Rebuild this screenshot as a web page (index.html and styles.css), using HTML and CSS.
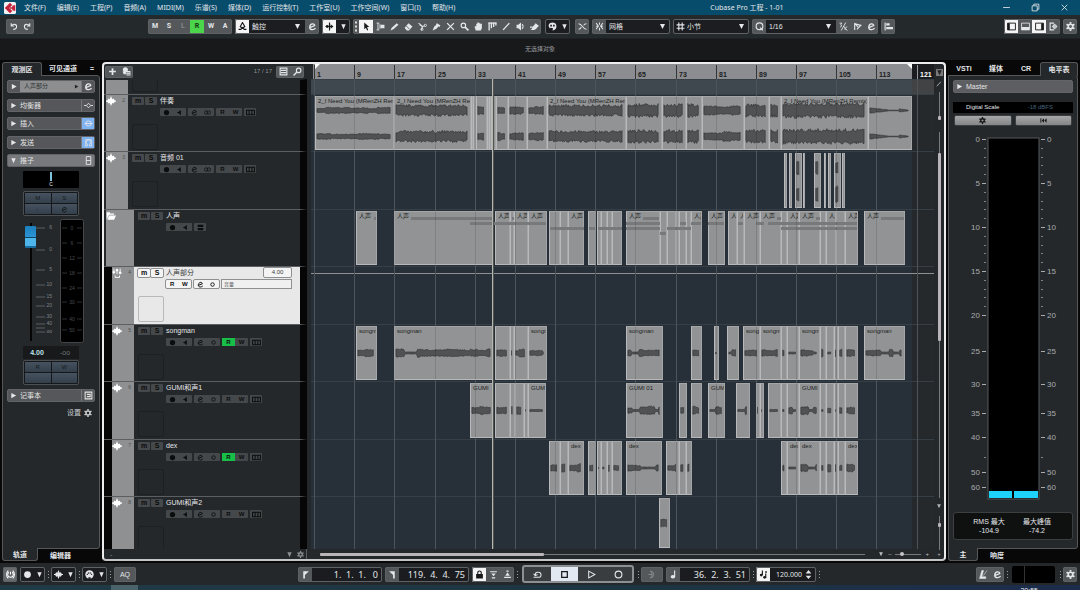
FILE: index.html
```html
<!DOCTYPE html>
<html lang="zh-CN">
<head>
<meta charset="utf-8">
<title>Cubase Pro 工程 - 1-01</title>
<link rel="stylesheet" href="styles.css">
</head>
<body>
<svg class="sprite" aria-hidden="true">
  <symbol id="i-undo" viewBox="0 0 16 16"><path d="M4 2v5h5M4.500 7c2-4 9-4 9 1 0 4-4 5-6 5" fill="none" stroke="currentColor" stroke-width="2"/></symbol>
  <symbol id="i-redo" viewBox="0 0 16 16"><path d="M12 2v5H7M11.500 7c-2-4-9-4-9 1 0 4 4 5 6 5" fill="none" stroke="currentColor" stroke-width="2"/></symbol>
  <symbol id="i-edit" viewBox="0 0 16 16"><path d="M3 10 12 6.500C12 1.500 4 2 3 8.500 2.500 15 10 15 13.500 11" fill="none" stroke="currentColor" stroke-width="2.200"/></symbol>
  <symbol id="i-touch" viewBox="0 0 16 16"><path d="M8 1 4 8l4 3 4-3zM1 13h4l3-3 3 3h4" fill="none" stroke="currentColor" stroke-width="2"/></symbol>
  <symbol id="i-scroll" viewBox="0 0 16 16"><path d="M7 1h2v14H7zM1 7h9V4l5 4-5 4V9H1z"/><circle cx="4" cy="8" r="2.500"/></symbol>
  <symbol id="i-arrow" viewBox="0 0 16 16"><path d="M4 1v12l3-3 2 5 2-1-2-5h4z"/></symbol>
  <symbol id="i-range" viewBox="0 0 16 16"><path d="M1 2h5M1 14h5M3.500 2v12M7 4v8" fill="none" stroke="currentColor" stroke-width="1.600"/><path d="M8 5h7v6H8z"/></symbol>
  <symbol id="i-pencil" viewBox="0 0 16 16"><path d="m1 15 2-5 9-8 3 3-9 8z"/></symbol>
  <symbol id="i-eraser" viewBox="0 0 16 16"><path d="m1 10 7-8 7 6-6 7H5z"/><path d="m4 7 6 6" stroke="#55585b" stroke-width="1.500"/></symbol>
  <symbol id="i-scissors" viewBox="0 0 16 16"><path d="m1 2 7 6 4-1M6 14l2-6M8 8 3 5" fill="none" stroke="currentColor" stroke-width="2"/><circle cx="13" cy="6" r="2" fill="none" stroke="currentColor" stroke-width="1.500"/><circle cx="7" cy="13" r="2" fill="none" stroke="currentColor" stroke-width="1.500"/></symbol>
  <symbol id="i-glue" viewBox="0 0 16 16"><path d="m1 15 3-7 5-4 3 3-4 5zM9 2l6 4-2 3-6-5z"/></symbol>
  <symbol id="i-cross" viewBox="0 0 16 16"><path d="m2 2 12 12M14 2 2 14" stroke="currentColor" stroke-width="2.200"/></symbol>
  <symbol id="i-search" viewBox="0 0 16 16"><circle cx="6" cy="6" r="4" fill="none" stroke="currentColor" stroke-width="2"/><path d="m9 9 6 6" stroke="currentColor" stroke-width="3"/></symbol>
  <symbol id="i-find" viewBox="0 0 16 16"><circle cx="10" cy="6" r="4" fill="none" stroke="currentColor" stroke-width="2"/><path d="m7 9-6 6" stroke="currentColor" stroke-width="2.500"/></symbol>
  <symbol id="i-hand" viewBox="0 0 16 16"><path d="M3 15 1 8l2-1 1 2V3h2V1h3v1h2v1h3v8l-2 4z"/></symbol>
  <symbol id="i-comp" viewBox="0 0 16 16"><path d="M2 1v14M6 1v10M10 1v8M14 1v5" stroke="currentColor" stroke-width="2.400"/><path d="M1 2h14" stroke="currentColor" stroke-width="2"/></symbol>
  <symbol id="i-line" viewBox="0 0 16 16"><path d="M2 14 13 2" stroke="currentColor" stroke-width="2.400"/></symbol>
  <symbol id="i-speaker" viewBox="0 0 16 16"><path d="M1 5h3l5-4v14l-5-4H1z"/><path d="M11 4c2 2 2 6 0 8" fill="none" stroke="currentColor" stroke-width="2"/></symbol>
  <symbol id="i-brush" viewBox="0 0 16 16"><path d="M0 14c5-1 3-6 7-8l3-4 6 5c-3 1-4 6-9 7zM0 8h4v2H0z"/></symbol>
  <symbol id="i-palette" viewBox="0 0 16 16"><path d="M1 7c0-8 14-8 14 0 0 5-2 6-4 7l-3 1 1-4-4-1-2 1z"/><path d="M4 5h3v3H4zM9 5h3v3H9z" fill="#222"/></symbol>
  <symbol id="i-xfade" viewBox="0 0 16 16"><path d="M1 3c7 0 7 10 14 10M1 13c3 0 4-2 5-4M10 6c1-2 3-3 5-3" fill="none" stroke="currentColor" stroke-width="1.800"/></symbol>
  <symbol id="i-snap" viewBox="0 0 16 16"><path d="m2 2 4 5-4 6M14 2l-4 5 4 6M8 1v4M8 10v5M2 7.500h4M10 7.500h4" fill="none" stroke="currentColor" stroke-width="1.800"/></symbol>
  <symbol id="i-hash" viewBox="0 0 16 16"><path d="M5 1v14M11 1v14M1 5h14M1 11h14" stroke="currentColor" stroke-width="2"/></symbol>
  <symbol id="i-quant" viewBox="0 0 16 16"><circle cx="8" cy="7.500" r="6" fill="none" stroke="currentColor" stroke-width="2"/><path d="m9 10 5 5" stroke="currentColor" stroke-width="2"/></symbol>
  <symbol id="i-ratio" viewBox="0 0 16 16"><path d="M4 15 12 1M1 2h4L3 5l2 2-3 2M10 8l1 6M14 8l-3 4 4 3" fill="none" stroke="currentColor" stroke-width="1.600"/></symbol>
  <symbol id="i-flag" viewBox="0 0 16 16"><path d="M3 14V3l11 3-7 7M3 2l6 7" fill="none" stroke="currentColor" stroke-width="2"/></symbol>
  <symbol id="i-align" viewBox="0 0 16 16"><path d="M2 1v14" stroke="currentColor" stroke-width="2"/><path d="M4 2h6v4H4zM4 9h12v4H4z"/></symbol>
  <symbol id="i-zoneL" viewBox="0 0 16 16"><path d="M1 2h14v12H1z" fill="none" stroke="currentColor" stroke-width="1.600"/><path d="M1 2h4v12H1z"/></symbol>
  <symbol id="i-zoneB" viewBox="0 0 16 16"><path d="M1 2h14v12H1z" fill="none" stroke="currentColor" stroke-width="1.500"/><path d="M1 9h14v5H1z"/></symbol>
  <symbol id="i-zoneR" viewBox="0 0 16 16"><path d="M1 2h14v12H1z" fill="none" stroke="currentColor" stroke-width="1.600"/><path d="M11 2h4v12h-4z"/></symbol>
  <symbol id="i-setup" viewBox="0 0 16 16"><path d="M9 2H2v12h7" fill="none" stroke="currentColor" stroke-width="2"/><circle cx="10" cy="8" r="3" fill="none" stroke="currentColor" stroke-width="2"/><path d="M10 3v10M5 8h10" stroke="currentColor"/></symbol>
  <symbol id="i-gear" viewBox="0 0 16 16"><circle cx="8" cy="8" r="4" fill="none" stroke="currentColor" stroke-width="3"/><path d="M8 0v3M8 13v3M1 4l3 2M12 10l3 2M1 12l3-2M12 6l3-2" stroke="currentColor" stroke-width="3"/></symbol>
  <symbol id="i-plus" viewBox="0 0 16 16"><path d="M8 2v12M2 8h12" stroke="currentColor" stroke-width="3"/></symbol>
  <symbol id="i-preset" viewBox="0 0 16 16"><circle cx="6" cy="5" r="4.500"/><path d="M1 8h6v5H3zM8 7h7v8H8z"/><path d="M9 10h5M9 13h5" stroke="#55585b"/></symbol>
  <symbol id="i-list" viewBox="0 0 16 16"><path d="M2 2h12v12H2z" fill="none" stroke="currentColor" stroke-width="2"/><path d="M3 6h10M3 10h10" stroke="currentColor" stroke-width="2"/></symbol>
  <symbol id="i-wave" viewBox="0 0 16 16"><path d="M0 7h2l2-3 2 1 2-5 2 5 2-1 2 3h2v2h-2l-2 3-2-1-2 5-2-5-2 1-2-3H0z"/></symbol>
  <symbol id="i-folder" viewBox="0 0 16 16"><path d="M1 13V2h5l1 2h6v2H5z"/><path d="M5 7h11l-3 7H2z"/></symbol>
  <symbol id="i-faders" viewBox="0 0 16 16"><path d="M3 1v9M8 1v9M13 1v9M5 15h7v-3M5 15v-3" fill="none" stroke="currentColor" stroke-width="1.500"/><path d="M1 5h4v3H1zM6 2h4v3H6zM11 6h4v3h-4z"/></symbol>
  <symbol id="i-rec" viewBox="0 0 16 16"><circle cx="8" cy="8" r="6"/></symbol>
  <symbol id="i-ring" viewBox="0 0 16 16"><circle cx="8" cy="8" r="6" fill="none" stroke="currentColor" stroke-width="2"/></symbol>
  <symbol id="i-mono" viewBox="0 0 16 16"><circle cx="8" cy="8" r="4" fill="none" stroke="currentColor" stroke-width="2"/></symbol>
  <symbol id="i-stereo" viewBox="0 0 16 16"><circle cx="5" cy="8" r="4" fill="none" stroke="currentColor" stroke-width="1.600"/><circle cx="11" cy="8" r="4" fill="none" stroke="currentColor" stroke-width="1.600"/></symbol>
  <symbol id="i-monitor" viewBox="0 0 16 16"><path d="M3 7h2l6-5v12L5 9H3z"/></symbol>
  <symbol id="i-takes" viewBox="0 0 16 16"><path d="M1 4h14v8H1zM5.500 4v8M10.500 4v8" fill="none" stroke="currentColor" stroke-width="1.800"/></symbol>
  <symbol id="i-equal" viewBox="0 0 16 16"><path d="M3 3h10v4H3zM3 9h10v4H3z"/></symbol>
  <symbol id="i-eq" viewBox="0 0 16 16"><path d="M0 8h4l4-4 4 4-4 4-4-4M12 8h4" fill="none" stroke="currentColor" stroke-width="1.600"/></symbol>
  <symbol id="i-insert" viewBox="0 0 16 16"><path d="M1 8h14" stroke="currentColor" stroke-width="1.600"/><ellipse cx="8" cy="8" rx="5" ry="4.500" fill="none" stroke="currentColor" stroke-width="1.500"/></symbol>
  <symbol id="i-send" viewBox="0 0 16 16"><path d="M3 14V3h10v11M2 14h4v-3a4 4 0 1 1 4 0v3h4" fill="none" stroke="currentColor" stroke-width="1.400"/></symbol>
  <symbol id="i-fader" viewBox="0 0 16 16"><path d="M4 1h8v14H4zM4 8h8" fill="none" stroke="currentColor" stroke-width="1.600"/></symbol>
  <symbol id="i-note" viewBox="0 0 16 16"><path d="M2 2h12v12H2zM5 6h6v4H5" fill="none" stroke="currentColor" stroke-width="1.800"/></symbol>
  <symbol id="i-tri" viewBox="0 0 16 16"><path d="m3 2 11 6-11 6z"/></symbol>
  <symbol id="i-down" viewBox="0 0 16 16"><path d="M3 3h10L8 14z"/></symbol>
  <symbol id="i-restart" viewBox="0 0 16 16"><path d="M1 3h2v10H1zM9 3v10L4 8zM15 3v10l-5-5z"/></symbol>
  <symbol id="i-power" viewBox="0 0 16 16"><path d="M4 1C0 5 0 11 4 15M12 1c4 4 4 10 0 14M8 3v5" fill="none" stroke="currentColor" stroke-width="1.800"/><path d="M5 4a5 5 0 1 0 6 0" fill="none" stroke="currentColor" stroke-width="1.800"/></symbol>
  <symbol id="i-midi" viewBox="0 0 16 16"><circle cx="8" cy="8" r="7.500"/><path d="M4 9a4 4 0 0 1 8 0" fill="none" stroke="#222" stroke-width="2" stroke-dasharray="2 1"/><path d="M6 13h4v3H6z" fill="#222"/></symbol>
  <symbol id="i-locL" viewBox="0 0 16 16"><path d="M4 2h10L7 9v6H4z"/></symbol>
  <symbol id="i-locR" viewBox="0 0 16 16"><path d="M12 2H2l7 7v6h3z"/></symbol>
  <symbol id="i-lock" viewBox="0 0 16 16"><path d="M2 7h12v8H2z"/><path d="M5 8V4c0-3 6-3 6 0v4" fill="none" stroke="currentColor" stroke-width="2"/></symbol>
  <symbol id="i-punchin" viewBox="0 0 16 16"><path d="M2 2h12v2H2zM4 6h8l-4 5zM5 13h6v2H5z"/></symbol>
  <symbol id="i-punchout" viewBox="0 0 16 16"><path d="M6 1h4v2H6zM8 4l4 6H4zM2 12h12v2H2z"/></symbol>
  <symbol id="i-loop" viewBox="0 0 16 16"><path d="M1 13h10c5-1 4-9-1-9H8C5 4 4 7 4 9M1 7l3 3 4-2" fill="none" stroke="currentColor" stroke-width="1.800"/></symbol>
  <symbol id="i-stop" viewBox="0 0 16 16"><path d="M3 3h10v10H3z" fill="none" stroke="currentColor" stroke-width="2.200"/></symbol>
  <symbol id="i-play" viewBox="0 0 16 16"><path d="m3 2 11 6-11 6z" fill="none" stroke="currentColor" stroke-width="1.800"/></symbol>
  <symbol id="i-jog" viewBox="0 0 16 16"><path d="M4 2a6 6 0 1 1 0 12c4-2 4-10 0-12M1 8h7" fill="none" stroke="currentColor" stroke-width="1.600"/></symbol>
  <symbol id="i-quaver" viewBox="0 0 16 16"><ellipse cx="7" cy="12" rx="4" ry="3"/><path d="M9 1h2v11H9z"/></symbol>
  <symbol id="i-tempo" viewBox="0 0 16 16"><path d="M5 1h2v8H5zM11 6h2v8h-2z"/><circle cx="4" cy="9" r="2.500"/><circle cx="10" cy="13" r="2.500"/><path d="M11 2h3v3h-3z"/></symbol>
  <symbol id="i-metro" viewBox="0 0 16 16"><path d="M5 1h3L5 12h7v3H1zM8 10l6-9" stroke="currentColor" fill="currentColor"/></symbol>
  <symbol id="i-updown" viewBox="0 0 16 16"><path d="m8 0 5 6H3zM8 16l5-6H3z"/></symbol>
  <symbol id="i-min" viewBox="0 0 16 16"><path d="M2 8h12" stroke="currentColor" stroke-width="1.500"/></symbol>
  <symbol id="i-restore" viewBox="0 0 16 16"><path d="M2 5h9v9H2zM5 5V2h9v9h-3" fill="none" stroke="currentColor" stroke-width="1.500"/></symbol>
  <symbol id="i-close" viewBox="0 0 16 16"><path d="m3 3 10 10M13 3 3 13" stroke="currentColor" stroke-width="1.500"/></symbol>
  <symbol id="i-logo" viewBox="0 0 16 16"><rect width="16" height="16" rx="2" fill="#f3f3f5"/><path d="M8 1 1 8l7 7 3-3-4-4 4-4zM11 5l4-1v8l-4-1V9H8V7h3z" fill="#c2233b"/></symbol>
</svg>

<header class="titlebar">
  <svg class="logo"><use href="#i-logo"/></svg>
  <nav class="menu" aria-label="主菜单">
    <a href="#">文件(F)</a><a href="#">编辑(E)</a><a href="#">工程(P)</a><a href="#">音频(A)</a><a href="#">MIDI(M)</a><a href="#">乐谱(S)</a><a href="#">媒体(D)</a><a href="#">运行控制(T)</a><a href="#">工作室(U)</a><a href="#">工作空间(W)</a><a href="#">窗口(I)</a><a href="#">帮助(H)</a>
  </nav>
  <h1 class="title">Cubase Pro 工程 - 1-01</h1>
  <div class="winbtns">
    <button aria-label="最小化"><svg><use href="#i-min"/></svg></button>
    <button aria-label="还原"><svg><use href="#i-restore"/></svg></button>
    <button aria-label="关闭"><svg><use href="#i-close"/></svg></button>
  </div>
</header>

<div class="toolbar" role="toolbar">
  <div class="group undo"><button aria-label="撤销"><svg><use href="#i-undo"/></svg></button><button aria-label="重做"><svg><use href="#i-redo"/></svg></button></div>
  <div class="group states"><button>M</button><button>S</button><button class="dim">L</button><button class="green">R</button><button>W</button><button>A</button></div>
  <div class="group"><button class="on" aria-label="自动化模式"><svg><use href="#i-touch"/></svg></button><select class="sel w56" aria-label="自动化"><option>触控</option></select><button aria-label="编辑"><svg><use href="#i-edit"/></svg></button></div>
  <div class="group"><button class="on" aria-label="自动滚动"><svg><use href="#i-scroll"/></svg></button><button class="dark small" aria-label="滚动选项"><svg><use href="#i-down"/></svg></button></div>
  <div class="group tools" id="tools"><i class="grip"></i></div>
  <div class="group color"><button class="dark" aria-label="颜色"><svg><use href="#i-palette"/></svg></button><button class="dark slim small" aria-label="颜色菜单"><svg><use href="#i-down"/></svg></button></div>
  <div class="group"><button aria-label="交叉淡化"><svg><use href="#i-xfade"/></svg></button></div>
  <div class="group"><button aria-label="吸附"><svg><use href="#i-snap"/></svg></button><select class="sel w64" aria-label="吸附类型"><option>网格</option></select></div>
  <div class="group"><button class="dark" aria-label="网格类型"><svg><use href="#i-hash"/></svg></button><select class="sel w62 flush" aria-label="网格"><option>小节</option></select></div>
  <div class="group"><button aria-label="量化"><svg><use href="#i-quant"/></svg></button><select class="sel w70" aria-label="量化预设"><option>1/16</option></select><button aria-label="比例"><svg><use href="#i-ratio"/></svg></button><button aria-label="应用"><svg><use href="#i-flag"/></svg></button><button aria-label="量化面板"><svg><use href="#i-edit"/></svg></button></div>
  <div class="group"><button aria-label="对齐"><svg><use href="#i-align"/></svg></button></div>
  <div class="group right"><button class="on" aria-label="左区域"><svg><use href="#i-zoneL"/></svg></button><button aria-label="下区域"><svg><use href="#i-zoneB"/></svg></button><button class="on" aria-label="右区域"><svg><use href="#i-zoneR"/></svg></button><button aria-label="窗口布局"><svg><use href="#i-setup"/></svg></button></div>
  <div class="group"><button aria-label="设置"><svg><use href="#i-gear"/></svg></button></div>
</div>
<div class="infoline">无选择对象</div>

<main class="main">
  <aside class="side">
    <div class="tabs"><button class="tab active w40">观测区</button><button class="tab grow">可见通道</button><button class="tab w16">=</button></div>
    <div class="panel left">
      <div class="sections">
        <div class="section track"><svg><use href="#i-tri"/></svg><span>人声部分</span><svg><use href="#i-tri"/></svg><b><svg><use href="#i-edit"/></svg></b></div>
        <div class="section"><svg><use href="#i-tri"/></svg><span>均衡器</span><b><svg><use href="#i-eq"/></svg></b></div>
        <div class="section"><svg><use href="#i-tri"/></svg><span>插入</span><b class="blue"><svg><use href="#i-insert"/></svg></b></div>
        <div class="section"><svg><use href="#i-tri"/></svg><span>发送</span><b class="blue"><svg><use href="#i-send"/></svg></b></div>
        <div class="section open"><svg><use href="#i-down"/></svg><span>推子</span><b><svg><use href="#i-fader"/></svg></b></div>
      </div>
      <div class="strip">
        <div class="pan"><i></i><span>C</span></div>
        <div class="quad"><button>M</button><button>S</button><button class="dim">L</button><button aria-label="编辑通道"><svg><use href="#i-edit"/></svg></button></div>
        <div class="faderbox">
          <input class="fader" type="range" min="0" max="100" value="97" aria-label="音量">
          <svg class="scale" id="faderScale" viewBox="0 0 24 124"></svg>
          <svg class="chmeter" id="chMeter" viewBox="0 0 24 124"></svg>
        </div>
        <div class="vals"><b>4.00</b><span>-oo</span></div>
        <div class="quad"><button>R</button><button>W</button><button aria-label="空"></button><button aria-label="空"></button></div>
      </div>
      <div class="section"><svg><use href="#i-tri"/></svg><span>记事本</span><b><svg><use href="#i-note"/></svg></b></div>
      <button class="settings">设置 <svg><use href="#i-gear"/></svg></button>
    </div>
    <div class="tabs bottom"><button class="tab active w36">轨道</button><button class="tab grow start">编辑器</button></div>
  </aside>

  <section class="project">
    <div class="tracks">
      <div class="thead">
        <div class="group"><button aria-label="添加轨道"><svg><use href="#i-plus"/></svg></button><button aria-label="预设"><svg><use href="#i-preset"/></svg></button></div>
        <span class="count">17 / 17</span>
        <div class="group"><button aria-label="轨道列表"><svg><use href="#i-list"/></svg></button><button aria-label="查找"><svg><use href="#i-find"/></svg></button></div>
      </div>
      <div class="rows" id="tracks"></div>
      <div class="tfoot"><span>-</span><svg><use href="#i-down"/></svg><svg><use href="#i-gear"/></svg></div>
    </div>
    <div class="arrange">
      <div class="ruler" id="ruler"></div>
      <div class="rows lanes" id="lanes"></div>
      <div class="hscroll"><div class="htrack"><i></i></div><svg><use href="#i-down"/></svg><span>–</span><div class="zoom"><i></i></div><span>+</span></div>
    </div>
    <div class="vscroll">
      <button aria-label="标尺选项"><svg><use href="#i-down"/></svg></button>
      <svg class="ic"><use href="#i-line"/></svg>
      <div class="vline v1"><i></i></div>
      <div class="vline v2"><i></i></div>
      <svg class="ic"><use href="#i-down"/></svg>
      <div class="vline v3"><i></i></div>
      <span>+</span>
    </div>
  </section>

  <aside class="side">
    <div class="tabs"><button class="tab w32">VSTi</button><button class="tab grow">媒体</button><button class="tab w28">CR</button><button class="tab active w38">电平表</button></div>
    <div class="panel meterpanel">
      <div class="section master"><svg><use href="#i-tri"/></svg><span>Master</span></div>
      <div class="digital"><span>Digital Scale</span><span class="db">-18 dBFS</span></div>
      <div class="mbtns"><button aria-label="电平表设置"><svg><use href="#i-gear"/></svg></button><button aria-label="重置"><svg><use href="#i-restart"/></svg></button></div>
      <svg class="bigmeter" id="bigMeter" viewBox="0 0 120 372"></svg>
      <dl class="readout"><div><dt>RMS 最大</dt><dd>-104.9</dd></div><div><dt>最大峰值</dt><dd>-74.2</dd></div></dl>
    </div>
    <div class="tabs bottom"><button class="tab active w30">主</button><button class="tab grow start">响度</button></div>
  </aside>
</main>

<footer class="transport">
  <div class="group"><button class="lit" aria-label="激活工程"><svg><use href="#i-power"/></svg></button></div>
  <div class="group"><button class="dark" aria-label="录音模式"><svg><use href="#i-rec"/></svg></button><button class="dark slim small" aria-label="录音选项"><svg><use href="#i-down"/></svg></button></div><i class="dots"></i>
  <div class="group"><button class="dark" aria-label="音频录音"><svg><use href="#i-wave"/></svg></button><button class="dark slim small" aria-label="音频选项"><svg><use href="#i-down"/></svg></button></div><i class="dots"></i>
  <div class="group"><button class="dark" aria-label="MIDI录音"><svg><use href="#i-midi"/></svg></button><button class="dark slim small" aria-label="MIDI选项"><svg><use href="#i-down"/></svg></button></div><i class="dots"></i>
  <div class="group aq"><button>AQ</button></div>
  <div class="group locl"><button aria-label="左定位"><svg><use href="#i-locL"/></svg></button><output class="num w70">1.  1.  1.   0</output></div>
  <div class="group"><button aria-label="右定位"><svg><use href="#i-locR"/></svg></button><output class="num w70">119.  4.  4.  75</output></div>
  <div class="group"><button class="on" aria-label="锁定"><svg><use href="#i-lock"/></svg></button><button aria-label="切入"><svg><use href="#i-punchin"/></svg></button><button aria-label="切出"><svg><use href="#i-punchout"/></svg></button></div><i class="dots"></i>
  <div class="group keys"><button aria-label="循环"><svg><use href="#i-loop"/></svg></button><button class="stop" aria-label="停止"><svg><use href="#i-stop"/></svg></button><button aria-label="播放"><svg><use href="#i-play"/></svg></button><button aria-label="录音"><svg><use href="#i-ring"/></svg></button></div><i class="dots"></i>
  <div class="group faint"><button aria-label="走带"><svg><use href="#i-jog"/></svg></button></div>
  <div class="group"><button aria-label="时间格式"><svg><use href="#i-quaver"/></svg></button><output class="num w70">36.  2.  3.  51</output></div><i class="dots"></i>
  <div class="group"><button class="on" aria-label="速度轨道"><svg><use href="#i-tempo"/></svg></button><output class="num tempo">120.000 <svg><use href="#i-updown"/></svg></output></div><i class="dots"></i>
  <div class="group right"><button aria-label="节拍器"><svg><use href="#i-metro"/></svg></button><button aria-label="节拍器设置"><svg><use href="#i-edit"/></svg></button></div><i class="dots"></i>
  <div class="minimeter"></div><i class="dots"></i>
  <div class="group"><button aria-label="走带设置"><svg><use href="#i-gear"/></svg></button></div>
</footer>
<div class="taskbar"><i></i><span>20:55</span></div>
<script src="app.js"></script>
</body>
</html>
```
FILE: styles.css
```css
* { box-sizing: border-box; }
body {
  margin: 0; min-height: 100vh; display: flex; flex-direction: column; background: #080808; color: #e4e6e8;
  font: 7px/9px "Liberation Sans", "Noto Sans CJK SC", sans-serif; overflow: hidden;
}
button, select, input { font: inherit; color: inherit; margin: 0; padding: 0; border: 0; background: none; }
a { color: inherit; text-decoration: none; }
svg { width: 9px; height: 9px; fill: currentColor; flex: none; display: block; }
.sprite { position: absolute; width: 0; height: 0; }

.titlebar { height: 15px; background: #084c6c; display: flex; align-items: center; font-family: "Noto Sans", "Noto Sans CJK SC", sans-serif; }
.logo { width: 12px; height: 12px; margin: 0 8px 0 4px; }
.menu { display: flex; gap: 11px; white-space: nowrap; }
.title { font: inherit; margin: 0 0 0 255px; white-space: nowrap; }
.winbtns { display: flex; gap: 20px; margin: 0 11px 0 auto; }

.toolbar { height: 23px; background: #24292c; display: flex; align-items: center; gap: 3px; padding: 0 3px 0 6px; }
.group { display: flex; align-items: stretch; height: 15px; outline: 1px solid #5f6265; outline-offset: -1px; border-radius: 2px; background: #55585b; flex: none; overflow: hidden; }
.group button { width: 14px; display: flex; align-items: center; justify-content: center; }
.group button svg { width: 9px; height: 9px; }
.undo { margin-right: 111px; }
.states { font-weight: 700; font-family: Roboto, sans-serif; }
.dim { color: #85888a; }
.green { background: #4bd54b; color: #143814; }
.group .on { background: #f4f4f4; color: #16181a; }
.group .dark { background: #1b1d20; }
.group .slim { width: 11px; }
.group .small svg { width: 7px; height: 7px; }
.group .lit { color: #fff; background: #686b6e; }
.sel { appearance: none; padding: 0 12px 0 3px; background: #1b1d20 url("data:image/svg+xml,%3Csvg xmlns='http://www.w3.org/2000/svg' viewBox='0 0 6 6'%3E%3Cpath d='M0 0h6L3 6z' fill='%23e4e6e8'/%3E%3C/svg%3E") right 5px center / 5px 5px no-repeat; }
.w56 { width: 56px; } .w62 { width: 62px; } .w64 { width: 64px; } .w70 { width: 70px; }
.flush { padding-left: 0; }
.color { margin: 0 2px 0 1px; }
.grip { width: 6px; background: radial-gradient(#ddd 1px, transparent 1px) center / 4px 4px; }
.right { margin-left: auto; }
.infoline { height: 22px; background: #18191b; color: #9c9ea0; text-align: center; line-height: 20px; font-size: 6px; border-top: 1px solid #1e2022; }

.main { display: grid; grid-template-columns: 98px 1fr 130px; gap: 2px; padding: 2px; }
.side { display: flex; flex-direction: column; min-width: 0; }
.tabs { display: flex; height: 13px; flex: none; font-weight: 700; }
.tab { height: 13px; font-weight: 700; }
.tab.active { background: #24282b; border: 1px solid #55585a; border-bottom: 0; border-radius: 3px 3px 0 0; height: 14px; position: relative; z-index: 1; }
.bottom { height: 12px; }
.bottom .active { border: 1px solid #55585a; border-top: 0; border-radius: 0 0 3px 3px; margin-top: -1px; height: 13px; }
.grow { flex: 1; } .start { text-align: left; padding-left: 12px; }
.w16 { width: 16px; } .w28 { width: 28px; } .w30 { width: 30px; } .w32 { width: 32px; } .w36 { width: 36px; } .w38 { width: 38px; } .w40 { width: 40px; }
.panel { flex: 1; background: #24282b; border: 1px solid #55585a; border-radius: 0 3px 3px 0; display: flex; flex-direction: column; padding: 4px; }
.sections { display: flex; flex-direction: column; justify-content: space-between; height: 87px; }
.section { height: 13px; display: flex; align-items: center; gap: 3px; background: #55575a; border: 1px solid #626467; border-radius: 2px; padding-left: 2px; color: #e6e6e6; }
.section svg { width: 7px; height: 7px; }
.section span { flex: 1; }
.section b { width: 13px; height: 11px; display: flex; align-items: center; justify-content: center; border-left: 1px solid #77797c; }
.section b svg { width: 9px; height: 9px; }
.section.track { background: #8c8e90; gap: 2px; }
.section.track > svg:first-child { background: #55575a; width: 12px; height: 11px; padding: 2px; margin-left: -2px; }
.section.track span { color: #303234; padding-left: 2px; font-size: 6px; }
.section.track > svg:nth-of-type(2) { width: 5px; color: #222; }
.section.track b { background: #55575a; }
.section.open { background: #77797c; }
.section .blue { background: #7fb2f0; }
.strip { width: 56px; margin: 4px auto 4px 16px; display: flex; flex-direction: column; gap: 3px; }
.pan { height: 17px; background: #000; display: flex; flex-direction: column; align-items: center; font-size: 5px; line-height: 6px; border-radius: 1px; }
.pan i { width: 2px; height: 9px; margin-top: 1px; background: #7fc4d8; }
.quad { height: 25px; display: grid; grid-template: 1fr 1fr / 1fr 1fr; gap: 1px; background: #15181a; border: 1px solid #4c5053; border-radius: 2px; padding: 1px; font-size: 6px; }
.quad button { background: linear-gradient(#46525f, #33404c); color: #15181b; display: flex; align-items: center; justify-content: center; min-height: 0; overflow: hidden; }
.quad svg { width: 7px; height: 7px; }
.quad .dim { color: #303a44; }
.faderbox { display: grid; grid-template-columns: 11px 1fr 24px; height: 124px; margin-left: 2px; }
.fader { appearance: none; writing-mode: vertical-lr; direction: rtl; width: 11px; height: 118px; margin-top: 4px; background: linear-gradient(90deg, transparent 5px, #050505 5px, #050505 7px, transparent 7px); }
.fader::-webkit-slider-thumb { appearance: none; width: 11px; height: 22px; border-radius: 1px; background: linear-gradient(#1d7fbd, #2a93d5 48%, #0c4266 48%, #0c4266 54%, #4db5ea 54%, #4db5ea 90%, #1a6c9e 90%); }
svg.scale, svg.chmeter { width: 24px; height: 124px; }
svg text { font-family: "Liberation Sans", sans-serif; }
.vals { height: 13px; display: grid; grid-template-columns: 1fr 1fr; background: #17191b; text-align: center; line-height: 13px; color: #6d7578; }
.vals b { color: #bfe3ee; }
.strip .vals { margin-bottom: -2px; }
.settings { align-self: flex-end; display: flex; align-items: center; gap: 3px; margin: 6px 3px 0; color: #c9cbcd; }
.settings svg { width: 8px; height: 8px; }

.project { border: 2px solid #ececee; border-bottom-color: #c5c5c8; border-radius: 4px; display: grid; grid-template-columns: 203px 1fr 10px; background: #24282b; overflow: hidden; }
.thead { height: 15px; display: flex; align-items: center; padding: 0 3px 0 1px; gap: 4px; }
.thead .group { height: 12px; }
.count { margin-left: auto; color: #8d9092; font-size: 6px; }
.rows { display: grid; grid-template-rows: 15px 57px 58px 57px 58px 57px 58px 57px 53px; overflow: hidden; }
.track-row { display: flex; border-top: 1px solid #5c5f61; border-right: 7px solid #060606; overflow: hidden; }
.track-row:first-child { border-top-color: #24282b; }
.tab-color { width: 22px; background: #8e9092; margin-left: 2px; display: flex; justify-content: space-between; padding: 1px 3px 0 0; color: #4c4e50; font-size: 5px; flex: none; }
.tab-color svg { color: #fff; width: 10px; height: 10px; }
.wide .tab-color { width: 28px; }
.child { background: linear-gradient(90deg, #060606 8px, transparent 8px); }
.child .tab-color { margin-left: 8px; }
.tbody { flex: 1; display: grid; grid-template-columns: 26px 1fr; grid-template-rows: 12px 12px 1fr; column-gap: 2px; padding: 1px 9px 0 4px; align-content: start; }
.ms { display: flex; gap: 1px; height: 8px; margin-top: 1px; }
.ms button { width: 12px; background: #46494b; color: #0a0a0a; font-weight: 700; border-radius: 1px; line-height: 8px; }
.name { display: flex; justify-content: space-between; line-height: 10px; }
.ctl { grid-column: 2; display: flex; gap: 2px; }
.ctl span { display: flex; width: 26px; height: 8px; background: #45484a; border-radius: 1px; }
.ctl span.one { width: 12px; }
.ctl button { flex: 1; display: flex; align-items: center; justify-content: center; color: #0b0c0d; font-weight: 700; font-size: 6px; }
.ctl svg { width: 7px; height: 7px; }
.ctl .one svg { width: 9px; height: 9px; }
.ctl .green { background: #17bf49; }
.pic { width: 26px; height: 26px; border: 1px solid #1d2022; border-radius: 2px; margin-top: 4px; }
.stub .pic { grid-row: 1; height: 12px; margin-top: -1px; border-top: 0; }
.selected .tbody { background: #e8e8e8; color: #3c3e40; }
.selected .ms button, .selected .ctl span, .selected .val { background: #f4f4f4; outline: 1px solid #8e9092; }
.selected .ctl span { width: 25px; }
.selected .ctl { gap: 3px; }
.selected .pic { border-color: #b7b9bb; }
.val { width: 27px; height: 9px; line-height: 9px; text-align: center; font-size: 6px; border-radius: 1px; }
.selected .ctl input { flex: 1; min-width: 0; height: 8px; outline: 1px solid #8e9092; background: #f0f0f0; font-size: 5px; padding-left: 2px; color: #55585a; }
.tfoot { height: 10px; display: flex; align-items: center; gap: 4px; padding: 0 2px 0 6px; color: #8d9092; border-right: 1px solid #5c5f61; }
.tfoot svg { width: 7px; height: 7px; }
.tfoot span { margin-right: auto; }

.arrange { padding-left: 4px; min-width: 0; }
.ruler { height: 15px; position: relative; background: linear-gradient(90deg, #24282b .4%, #8b8d90 .4%, #8b8d90 96.4%, #1a1c20 96.4%); color: #1c1d1f; font-weight: 700; overflow: hidden; }
.mark { position: absolute; top: 1px; bottom: 0; border-left: 1px solid #333537; padding: 6px 0 0 2px; line-height: 8px; }
.mark.out { color: #fff; border-color: #999; }
.flagL, .flagR { position: absolute; top: 0; width: 5px; height: 5px; background: #fff; clip-path: polygon(0 0, 100% 0, 0 100%); }
.flagR { clip-path: polygon(0 0, 100% 0, 100% 100%); }
.lanes { position: relative; background: linear-gradient(90deg, #272f38 96.4%, #25292b 96.4%); }
.lane { position: relative; border-top: 1px solid #363e46; }
.lane:first-child { background: linear-gradient(90deg, #3f484e 96.4%, #414345 96.4%); }
.gridline { position: absolute; top: 0; bottom: 0; width: 1px; background: #596066; }
.gridline.over { background: #00000020; z-index: 2; }
.playhead { position: absolute; top: 0; bottom: 0; width: 2px; background: linear-gradient(90deg, #b5b5b1 50%, #50544f 50%); z-index: 3; }
.clip { position: absolute; top: 1px; bottom: 1px; background: #919395; border: 1px solid #b9b9bc; border-top-color: #a4a6a8; border-right-color: #a4a6a8; overflow: hidden; color: #1c1e20; font-size: 6px; line-height: 8px; white-space: nowrap; z-index: 1; }
.clip span { position: absolute; left: 2px; top: 0; }
.clip svg { position: absolute; left: 0; top: 0; width: 100%; height: 100%; color: #505254; }
.bar { position: absolute; height: 3px; background: #77797b; z-index: 1; }
.auto { position: absolute; left: 0; right: 0; top: 6px; height: 1px; background: #8c9091; }
.hscroll { height: 10px; display: flex; align-items: center; gap: 4px; padding: 0 5px 0 9px; color: #c0c0c2; font-size: 6px; }
.hscroll svg { width: 6px; height: 6px; }
.htrack { flex: 1; height: 1px; background: #77797b; margin-right: 9px; }
.htrack i { display: block; width: 41%; height: 3px; margin-top: -1px; background: #b9b5b8; border-radius: 1px; }
.zoom { width: 26px; height: 1px; background: #77797b; }
.zoom i { display: block; width: 4px; height: 4px; border-radius: 2px; background: #c5c5c7; margin: -2px 0 0 5px; }
.vscroll { display: flex; flex-direction: column; align-items: center; font-size: 6px; color: #b5b5b7; }
.vscroll button { width: 7px; height: 7px; background: #77797b; color: #222; margin-top: 5px; }
.vscroll button svg { width: 7px; height: 7px; }
.ic { width: 6px; height: 6px; margin: 5px 0; }
.vline { width: 1px; background: #77797b; }
.vline i { display: block; width: 3px; margin-left: -1px; background: #b9b5b8; border-radius: 1px; }
.v1 { height: 28px; padding-top: 24px; } .v1 i { height: 4px; }
.v2 { flex: 1; margin-top: 12px; padding-top: 21px; } .v2 i { height: 188px; }
.v3 { height: 34px; padding-top: 7px; margin-top: 2px; } .v3 i { height: 4px; }

.master { height: 13px; background: #5c5e61; }
.digital { margin-top: 9px; height: 11px; background: #000; display: flex; justify-content: space-between; padding: 0 20px 0 13px; line-height: 11px; font-size: 6px; }
.db { color: #45637a; }
.mbtns { display: grid; grid-template-columns: 1fr 1fr; gap: 3px; margin: 2px 1px 0; height: 11px; }
.mbtns button { background: linear-gradient(#a5a7a9, #838587); border: 1px solid #3c3f41; border-radius: 2px; color: #111; display: flex; align-items: center; justify-content: center; }
.mbtns svg { width: 7px; height: 7px; }
svg.bigmeter { width: 120px; height: 372px; margin-top: 4px; }
.readout { margin: 10px 0 0; height: 28px; border: 1px solid #3c3f41; border-radius: 3px; background: #0f1111; display: grid; grid-template-columns: 1fr 1fr; padding: 4px 11px; text-align: center; }
.readout dt, .readout dd { margin: 0; }

.transport { height: 22px; background: #24282b; display: flex; align-items: center; gap: 3px; padding: 0 3px; }
.dots { width: 3px; height: 9px; margin: 0 -2px 0 -1px; background: radial-gradient(#999 1px, transparent 1px) center / 3px 3px; flex: none; }
.aq { margin-left: 1px; }
.aq button { width: 22px; }
.locl { margin-left: 159px; }
.num { background: #1a1c1f; text-align: right; padding-right: 4px; font: 9px/15px "Noto Sans", sans-serif; white-space: pre; }
.transport .tempo { font-size: 7px; display: flex; align-items: center; width: 46px; padding-left: 6px; justify-content: space-between; }
.keys { height: 18px; outline: 0; border: 2px solid #8d9092; border-radius: 3px; background: #3a3d40; margin: 0 1px 0 2px; }
.keys button { width: 27px; }
.keys .stop { background: #e2e8f2; color: #16181a; }
.faint button { width: 22px; color: #8d9092; }
.minimeter { width: 43px; height: 17px; background: linear-gradient(90deg, #000 12px, #333 12px, #333 13px, #000 13px); border-radius: 2px; margin: 0 2px; }
.taskbar { height: 5px; background: linear-gradient(90deg, #1f3b46, #1c3542 60%, #1c2c4c); display: flex; justify-content: space-between; overflow: hidden; padding: 0 42px 0 111px; line-height: 9px; }
.taskbar i { width: 27px; background: #4a636b; }
.taskbar span { padding-top: 1px; }
```
FILE: app.js
```js
const use = id => `<svg aria-hidden="true"><use href="#i-${id}"/></svg>`;
const SPAN = 623;
const pct = v => (v / SPAN * 100).toFixed(3) + '%';

const tools = ['arrow', 'range', 'pencil', 'eraser', 'scissors', 'glue', 'cross', 'search', 'hand', 'comp', 'line', 'speaker', 'brush'];
document.getElementById('tools').insertAdjacentHTML('beforeend',
  tools.map((t, i) => `<button class="${i ? '' : 'on'}" aria-label="${t}">${use(t)}</button>`).join(''));

/* track list */
const tracks = [
  { stub: 1 },
  { n: 2, name: '伴奏', icon: 'wave', st: 'stereo' },
  { n: 3, name: '音频 01', icon: 'wave', st: 'stereo' },
  { name: '人声', icon: 'folder', cls: 'wide', folder: 1 },
  { n: 4, name: '人声部分', icon: 'faders', cls: 'child selected', sel: 1 },
  { n: 5, name: 'songman', icon: 'wave', cls: 'child', read: 1 },
  { n: 6, name: 'GUMI和声1', icon: 'wave', cls: 'child' },
  { n: 7, name: 'dex', icon: 'wave', cls: 'child', read: 1 },
  { n: 8, name: 'GUMI和声2', icon: 'wave', cls: 'child' }
];
const b = (label, body, cls = '') => `<button class="${cls}" aria-label="${label}">${body}</button>`;
function controls(t) {
  const rw = `<span>${b('读取', 'R', t.read ? 'green' : '')}${b('写入', 'W')}</span>`;
  const ed = `<span>${b('编辑', use('edit'))}${b('声道', use(t.st || 'mono'))}</span>`;
  const rec = `<span>${b('录音', use('rec'))}${b('监听', use('monitor'))}</span>`;
  if (t.folder) return rec + `<span class="one">${b('组编辑', use('equal'))}</span>`;
  if (t.sel) return rw + ed + '<input aria-label="参数" value="音量">';
  return rec + ed + rw + `<span class="one">${b('分轨', use('takes'))}</span>`;
}
document.getElementById('tracks').innerHTML = tracks.map(t => t.stub
  ? '<div class="track-row stub"><div class="tab-color"></div><div class="tbody"><div class="pic"></div></div></div>'
  : `<div class="track-row ${t.cls || ''}"><div class="tab-color">${use(t.icon)}<span>${t.n || ''}</span></div>
     <div class="tbody"><div class="ms"><button>m</button><button>S</button></div>
     <div class="name"><span>${t.name}</span>${t.sel ? '<span class="val">4.00</span>' : ''}</div>
     <div class="ctl">${controls(t)}</div>${t.folder ? '' : '<div class="pic"></div>'}</div></div>`).join('');

/* ruler */
const marks = Array.from({ length: 16 }, (_, i) => ({ bar: 1 + i * 8, x: Math.round(3 + i * 40.17) }));
document.getElementById('ruler').innerHTML = marks.map(m =>
  `<span class="mark ${m.bar > 120 ? 'out' : ''}" style="left:${pct(m.x)}">${m.bar}</span>`).join('') +
  `<i class="flagL" style="left:${pct(4)}"></i><i class="flagR" style="left:${pct(596)}"></i>`;

/* waveforms */
let seed = 7;
const rnd = () => (seed = (seed * 16807) % 2147483647) / 2147483647;
function wave(w, mid, amp, kind) {
  const top = [], bot = [];
  let level = 0.7, left = 0;
  for (let x = 1; x <= w - 3; x += 1) {
    if (left-- <= 0) {
      level = kind === 'blob' ? (rnd() < 0.3 ? 0.25 : 0.6 + rnd() * 0.4) : 0.65 + rnd() * 0.35;
      left = 2 + rnd() * 6;
    }
    let env = level;
    if (kind === 'hard') env = 0.8;
    if (kind === 'tail') env = x < 20 ? 0.9 - x / 28 : x < w - 12 ? 0.1 : 0.5 * (w - x) / 12;
    const rough = kind === 'hard' ? 0.6 : 0.3;
    const a = amp * env * (1 - rough / 2 + rnd() * rough);
    const c = amp * env * (1 - rough / 2 + rnd() * rough);
    top.push(`${x} ${(mid - a).toFixed(1)}`);
    bot.unshift(`${x} ${(mid + c).toFixed(1)}`);
  }
  return top.length ? `<path d="M${top.concat(bot).join('L')}z" stroke="#2b2d2f" stroke-width=".6"/>` : '';
}
function clip(x1, x2, name, amp, kind, stereo) {
  const w = x2 - x1;
  const body = !amp ? '' : stereo ? wave(w, 14, amp, kind) + wave(w, 41, amp, kind) : wave(w, 27, amp, kind);
  return `<div class="clip" style="left:${pct(x1 - 311)};width:${pct(w)}"><svg viewBox="0 0 ${w} 54" preserveAspectRatio="none">${body}</svg>${name ? `<span>${name}</span>` : ''}</div>`;
}
const song = '2_I Need You (MRenZH Remix)';
const backing = [
  [315, 394, song, 3, 'soft'], [394, 471, song, 6, 'hard'], [471, 473, '', 6, 'hard'], [473, 476, '', 4, 'soft'], [476, 487, '', 4, 'soft'],
  [487, 489], [489, 491], [491, 496], [496, 508, '', 4, 'soft'], [508, 527, '', 4, 'soft'], [527, 547, '', 4, 'soft'],
  [547, 626, song, 6, 'hard'], [626, 662, '', 7, 'hard'], [662, 686, '', 7, 'hard'], [686, 702, '', 7, 'hard'], [702, 744, '', 5, 'soft'],
  [744, 769, '', 7, 'hard'], [769, 781, '', 7, 'hard'], [781, 868, song, 8, 'hard'], [868, 912, '', 3, 'tail']
].map(c => clip(c[0], c[1], c[2], c[3], c[4], true)).join('');
const audio1 = [[784, 787], [789, 792], [795, 802], [803, 805], [814, 821], [824, 826], [828, 831], [834, 841], [842, 845]]
  .map(([a, z]) => clip(a, z, '', 8, 'soft', true)).join('');
const V = '人声';
const folder = [
  [356, 377, V], [394, 494, V], [495, 510, V], [510, 514], [514, 528, V], [528, 547, V], [549, 560], [560, 568], [568, 584, V], [588, 596],
  [597, 601], [601, 607], [607, 612], [612, 622], [626, 660, V], [660, 667], [667, 676], [676, 679], [679, 686], [686, 691], [691, 702, V], [708, 725, V],
  [728, 737, V], [737, 744, V], [744, 760, V], [760, 781, V], [781, 787], [787, 799, V], [799, 820, V], [820, 826], [826, 836, V], [836, 845], [845, 858, V], [864, 905, V]
].map(c => clip(...c)).join('') + [
  [374, 376, 7], [411, 493, 7], [512, 514, 7], [470, 546, 12], [550, 584, 17], [589, 595, 17], [598, 622, 17], [643, 659, 7], [626, 660, 12], [626, 660, 17],
  [660, 666, 22], [667, 691, 17], [680, 686, 12], [691, 701, 12], [708, 724, 12], [738, 743, 12], [756, 764, 12], [768, 857, 12], [781, 857, 17],
  [777, 781, 7], [816, 820, 7], [881, 904, 7]
].map(([a, z, y]) => `<i class="bar" style="left:${pct(a - 311)};width:${pct(z - a)};top:${y}px"></i>`).join('');
const vocal = (list, amp) => list.map(([a, z, n]) => clip(a, z, n, amp, 'blob')).join('');
const S = 'songman', G = 'GUMI 01', D = 'dex';
const tail = n => [[781, 787], [787, 799, n[0]], [799, 820, n[1]], [820, 826], [826, 834], [834, 838], [838, 845], [845, 858, n[2]]];
const lanes = ['', backing, audio1, folder, '<i class="auto"></i>',
  vocal([[356, 377, S], [394, 494, S], [495, 510], [510, 514], [514, 528], [528, 547, S], [626, 663, S], [691, 702], [714, 719], [727, 739], [743, 760, S], [760, 781, S], ...tail(['', S, '']), [864, 905, S]], 4),
  vocal([[470, 494, 'GUMI'], [495, 510], [510, 515], [515, 524], [524, 528], [528, 546, G], [626, 663, G], [679, 687], [691, 702], [708, 725, G], [736, 750], [756, 760], [760, 764], [768, 781], ...tail(['', 'GUMI', ''])], 4),
  vocal([[549, 560], [560, 568], [568, 584, D], [588, 596], [597, 601], [601, 607], [607, 612], [612, 622], [626, 662, D], [666, 679], [679, 686], [686, 692], ...tail([D, D, D])], 4),
  vocal([[659, 670]], 5)
];
document.getElementById('lanes').innerHTML =
  lanes.map(l => `<div class="lane">${l}</div>`).join('') +
  marks.map(m => `<i class="gridline" style="left:${pct(m.x)}"></i><i class="gridline over" style="left:${pct(m.x)}"></i>`).join('') +
  `<i class="playhead" style="left:${pct(181)}"></i>`;

/* channel fader scale */
document.getElementById('faderScale').innerHTML = [['6', 9], ['0', 31], ['5', 51], ['10', 66], ['15', 78], ['20', 87], ['30', 98], ['40', 105], ['', 109], ['oo', 113]]
  .map(([t, y]) => `<path d="M0 ${y}h9" stroke="#5b5e60"/><text x="16" y="${y + 1}" font-size="5" text-anchor="end" fill="#808385">${t}</text>`).join('');
document.getElementById('chMeter').innerHTML = '<rect x=".5" y=".5" width="23" height="123" rx="2" fill="#000" stroke="#45484a"/>' +
  [['0', 9], ['6', 24], ['12', 39], ['18', 54], ['24', 69], ['30', 83], ['40', 100], ['50', 111]]
    .map(([t, y]) => `<path d="M2 ${y}h5M17 ${y}h5" stroke="#2c2e30"/><text x="12" y="${y + 2}" font-size="5" text-anchor="middle" fill="#4a4c4e">${t}</text>`).join('');

/* master meter */
const major = [[0, 9], [5, 53], [10, 97], [15, 141], [20, 185], [25, 221], [30, 254], [35, 283], [40, 307], [50, 342], [60, 357]];
let out = '<rect x="35" y="8" width="51" height="361" fill="#000" stroke="#55585a"/>';
major.forEach(([t, y], i) => {
  out += `<path d="M29 ${y + .5}h4M88 ${y + .5}h4" stroke="#a9abad"/><text x="27" y="${y + 3}" font-size="8" text-anchor="end" fill="#a9abad">${t}</text><text x="94" y="${y + 3}" font-size="8" fill="#a9abad">${t}</text>`;
  if (i < 4) for (let k = 1; k < 5; k++) {
    const m = Math.round(y + (major[i + 1][1] - y) * k / 5) + .5;
    out += `<path d="M31 ${m}h2M88 ${m}h2" stroke="#808284"/>`;
  }
});
out += '<path d="M31 327.500h2M88 327.500h2" stroke="#808284"/><path d="M36 361h23v7H36zM61 361h24v7H61z" fill="#1dd3fb"/>';
document.getElementById('bigMeter').innerHTML = out;
```
